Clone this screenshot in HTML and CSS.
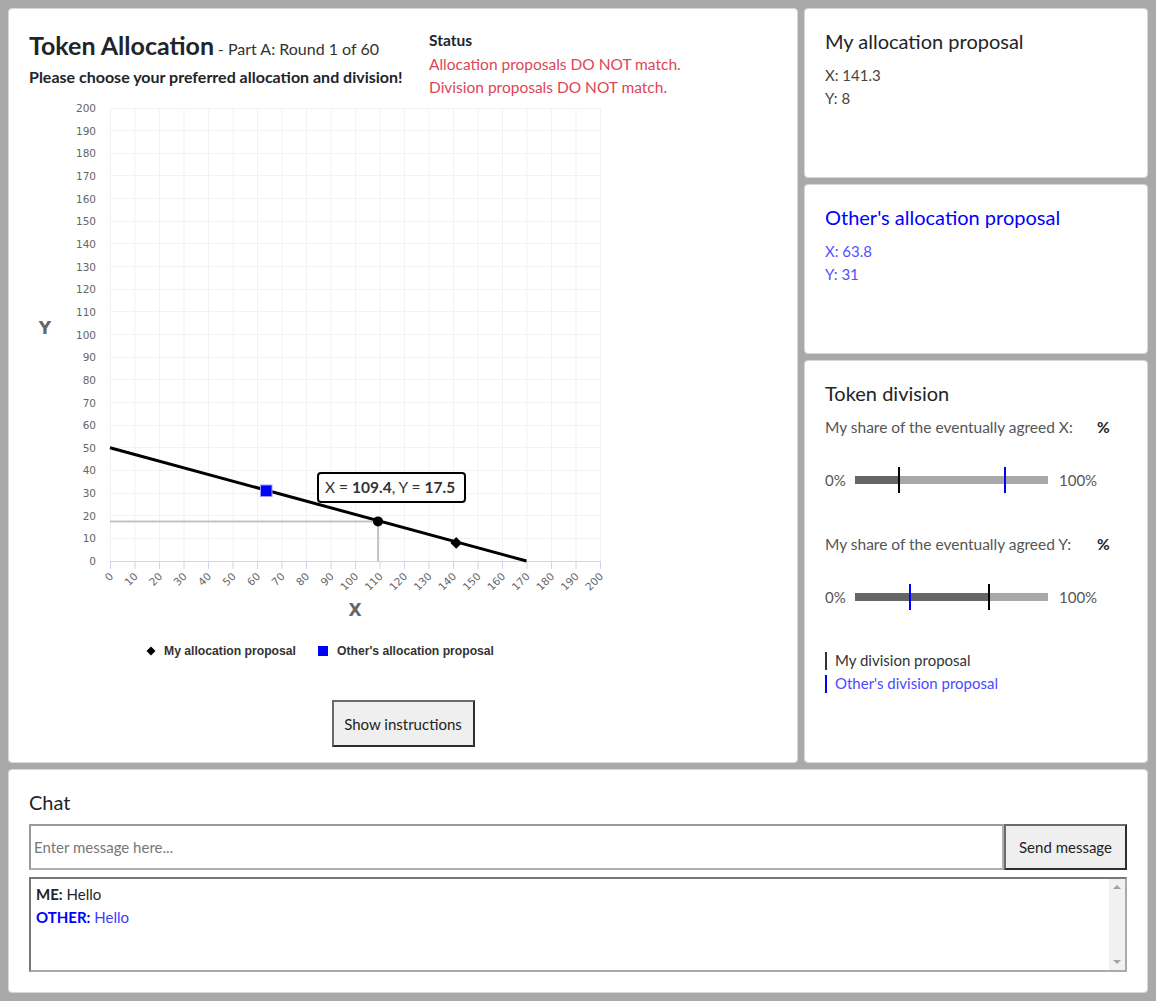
FILE: index.html
```html
<!DOCTYPE html>
<html>
<head>
<meta charset="utf-8">
<title>Token Allocation</title>
<link rel="stylesheet" href="styles.css">
</head>
<body>
<div class="page">
  <div class="top-row">
    <section class="panel main-panel">
      <div class="header">
        <div class="title-block">
          <div class="title-line"><span class="title">Token Allocation</span> <span class="round">- Part A: Round 1 of 60</span></div>
          <div class="instruction">Please choose your preferred allocation and division!</div>
        </div>
        <div class="status">
          <div class="status-head">Status</div>
          <div class="status-msg">Allocation proposals DO NOT match.</div>
          <div class="status-msg">Division proposals DO NOT match.</div>
        </div>
      </div>
      <svg class="chart" width="600" height="562" viewBox="0 0 600 562">
        <g class="grid">
          <path d="M81.5 9V462M106 9V462M130.5 9V462M155 9V462M179.5 9V462M204 9V462M228.5 9V462M253 9V462M277.5 9V462M302 9V462M326.5 9V462M351 9V462M375.5 9V462M400 9V462M424.5 9V462M449 9V462M473.5 9V462M498 9V462M522.5 9V462M547 9V462M571.5 9V462"/>
          <path d="M81 439.5H572M81 416.5H572M81 394.5H572M81 371.5H572M81 348.5H572M81 326.5H572M81 303.5H572M81 280.5H572M81 258.5H572M81 235.5H572M81 212.5H572M81 190.5H572M81 167.5H572M81 144.5H572M81 122.5H572M81 99.5H572M81 76.5H572M81 54.5H572M81 31.5H572M81 9.5H572"/>
        </g>
        <path class="axis" d="M81 462.5H572M81.5 462V470M106 462V470M130.5 462V470M155 462V470M179.5 462V470M204 462V470M228.5 462V470M253 462V470M277.5 462V470M302 462V470M326.5 462V470M351 462V470M375.5 462V470M400 462V470M424.5 462V470M449 462V470M473.5 462V470M498 462V470M522.5 462V470M547 462V470M571.5 462V470"/>
        <g class="ylabels">
          <text x="67" y="466">0</text>
          <text x="67" y="443.4">10</text>
          <text x="67" y="420.7">20</text>
          <text x="67" y="398">30</text>
          <text x="67" y="375.4">40</text>
          <text x="67" y="352.8">50</text>
          <text x="67" y="330.1">60</text>
          <text x="67" y="307.5">70</text>
          <text x="67" y="284.8">80</text>
          <text x="67" y="262.2">90</text>
          <text x="67" y="239.5">100</text>
          <text x="67" y="216.9">110</text>
          <text x="67" y="194.2">120</text>
          <text x="67" y="171.6">130</text>
          <text x="67" y="148.9">140</text>
          <text x="67" y="126.3">150</text>
          <text x="67" y="103.6">160</text>
          <text x="67" y="81">170</text>
          <text x="67" y="58.3">180</text>
          <text x="67" y="35.7">190</text>
          <text x="67" y="13">200</text>
        </g>
        <g class="xlabels">
          <text transform="translate(85 478) rotate(-45)">0</text>
          <text transform="translate(109.5 478) rotate(-45)">10</text>
          <text transform="translate(134 478) rotate(-45)">20</text>
          <text transform="translate(158.5 478) rotate(-45)">30</text>
          <text transform="translate(183 478) rotate(-45)">40</text>
          <text transform="translate(207.5 478) rotate(-45)">50</text>
          <text transform="translate(232 478) rotate(-45)">60</text>
          <text transform="translate(256.5 478) rotate(-45)">70</text>
          <text transform="translate(281 478) rotate(-45)">80</text>
          <text transform="translate(305.5 478) rotate(-45)">90</text>
          <text transform="translate(330 478) rotate(-45)">100</text>
          <text transform="translate(354.5 478) rotate(-45)">110</text>
          <text transform="translate(379 478) rotate(-45)">120</text>
          <text transform="translate(403.5 478) rotate(-45)">130</text>
          <text transform="translate(428 478) rotate(-45)">140</text>
          <text transform="translate(452.5 478) rotate(-45)">150</text>
          <text transform="translate(477 478) rotate(-45)">160</text>
          <text transform="translate(501.5 478) rotate(-45)">170</text>
          <text transform="translate(526 478) rotate(-45)">180</text>
          <text transform="translate(550.5 478) rotate(-45)">190</text>
          <text transform="translate(575 478) rotate(-45)">200</text>
        </g>
        <text class="axis-title" x="16" y="235">Y</text>
        <text class="axis-title" x="326" y="517">X</text>
        <path class="crosshair" d="M81 422.4H349M349 422.4V462"/>
        <path class="budget" d="M81 348.75L497.5 462"/>
        <circle class="hover-pt" cx="349" cy="422.4" r="5"/>
        <path class="my-pt" d="M427.2 438L433 443.9L427.2 449.8L421.4 443.9Z"/>
        <rect class="other-pt" x="231.5" y="386" width="11.5" height="11.5"/>
        <g class="tooltip">
          <rect x="289" y="374" width="147" height="29" rx="3"/>
          <text x="296" y="394">X = <tspan class="b">109.4</tspan>, Y = <tspan class="b">17.5</tspan></text>
        </g>
        <g class="legend">
          <path class="my-pt" d="M122 547.5L126.5 552L122 556.5L117.5 552Z"/>
          <text x="135" y="556" textLength="132" lengthAdjust="spacingAndGlyphs">My allocation proposal</text>
          <rect class="other-leg" x="289" y="547" width="10" height="10"/>
          <text x="308" y="556" textLength="157" lengthAdjust="spacingAndGlyphs">Other's allocation proposal</text>
        </g>
      </svg>
      <div class="btn-row"><button class="btn">Show instructions</button></div>
    </section>

    <div class="side">
      <section class="panel side-panel small">
        <h5 class="panel-title">My allocation proposal</h5>
        <div class="values">
          <div class="value">X: 141.3</div>
          <div class="value">Y: 8</div>
        </div>
      </section>
      <section class="panel side-panel small other">
        <h5 class="panel-title">Other's allocation proposal</h5>
        <div class="values">
          <div class="value">X: 63.8</div>
          <div class="value">Y: 31</div>
        </div>
      </section>
      <section class="panel side-panel grow">
        <h5 class="panel-title">Token division</h5>
        <div class="share-label"><span class="share-text">My share of the eventually agreed X:</span><span class="pct">%</span></div>
        <div class="slider-row">
          <span class="end">0%</span>
          <div class="bar">
            <div class="fill" style="width:22.8%"></div>
            <div class="marker mine" style="left:22.8%"></div>
            <div class="marker theirs" style="left:77.7%"></div>
          </div>
          <span class="end">100%</span>
        </div>
        <div class="share-label"><span class="share-text">My share of the eventually agreed Y:</span><span class="pct">%</span></div>
        <div class="slider-row">
          <span class="end">0%</span>
          <div class="bar">
            <div class="fill" style="width:69.4%"></div>
            <div class="marker theirs" style="left:28.5%"></div>
            <div class="marker mine" style="left:69.4%"></div>
          </div>
          <span class="end">100%</span>
        </div>
        <div class="div-legend">
          <div class="leg-item"><span class="leg-bar"></span>My division proposal</div>
          <div class="leg-item other-item"><span class="leg-bar"></span>Other's division proposal</div>
        </div>
      </section>
    </div>
  </div>

  <section class="panel chat-panel">
    <h5 class="panel-title">Chat</h5>
    <div class="chat-input-row">
      <input class="chat-input" type="text" placeholder="Enter message here...">
      <button class="btn send">Send message</button>
    </div>
    <div class="messages">
      <div class="msg-list">
        <div class="msg"><b>ME:</b> Hello</div>
        <div class="msg other-msg"><b>OTHER:</b> Hello</div>
      </div>
      <div class="scrollbar">
        <span class="arrow up"></span>
        <span class="arrow down"></span>
      </div>
    </div>
  </section>
</div>
</body>
</html>
```

FILE: styles.css
```css
* { box-sizing: border-box; }
html, body { margin: 0; padding: 0; }
body {
  background: #a9a9a9;
  font-family: Lato, "Open Sans", sans-serif;
  color: #212529;
  font-size: 15px;
}
.page {
  width: 1156px;
  height: 1001px;
  padding: 8px;
  display: flex;
  flex-direction: column;
  gap: 6px;
}
.top-row {
  display: flex;
  gap: 6px;
  height: 755px;
  flex-shrink: 0;
}
.panel {
  background: #fff;
  border: 1px solid #d8d8d8;
  border-radius: 4px;
  padding: 20px;
}
.main-panel {
  width: 790px;
  display: flex;
  flex-direction: column;
}
.main-panel > * { flex-shrink: 0; }
.header {
  display: flex;
  height: 70px;
}
.title-block { width: 400px; }
.title-line { line-height: 33px; white-space: nowrap; }
.title { font-size: 25px; font-weight: 700; }
.round { font-size: 16px; color: #333; }
.instruction { font-size: 16px; font-weight: 700; margin-top: 0; line-height: 22px; white-space: nowrap; }
.status { line-height: 23.5px; font-size: 15.5px; }
.status-head { font-weight: 700; }
.status-msg { color: #de4557; }

.chart { display: block; }
.grid path { stroke: #f2f2f2; stroke-width: 1; fill: none; }
.axis { stroke: #ccd6eb; stroke-width: 1; fill: none; }
.ylabels text { font-family: "DejaVu Sans", sans-serif; font-size: 10.5px; fill: #666; text-anchor: end; }
.xlabels text { font-family: "DejaVu Sans", sans-serif; font-size: 10.5px; fill: #666; text-anchor: end; }
.axis-title { font-family: "DejaVu Sans", sans-serif; font-size: 17px; font-weight: 700; fill: #666; text-anchor: middle; }
.crosshair { stroke: #c4c4c4; stroke-width: 2; fill: none; }
.budget { stroke: #000; stroke-width: 3; fill: none; }
.hover-pt { fill: #000; }
.my-pt { fill: #000; }
.other-pt { fill: #0000ff; stroke: #9a9aff; stroke-width: 1; }
.other-leg { fill: #0000ff; }
.tooltip rect { fill: #fff; stroke: #000; stroke-width: 2; }
.tooltip text { font-family: Lato, sans-serif; font-size: 15.5px; fill: #333; }
.tooltip .b { font-weight: 700; }
.legend text { font-family: "Liberation Sans", sans-serif; font-size: 12px; font-weight: 700; fill: #333; }

.btn-row { display: flex; justify-content: center; margin-top: 39px; }
.btn {
  font-family: Lato, "Open Sans", sans-serif;
  font-size: 15px;
  color: #222;
  background: #efefef;
  border: 2px solid;
  border-color: #6a6a6a #2e2e2e #2e2e2e #6a6a6a;
  padding: 0 10px;
  height: 47px;
  width: 143px;
}

.side {
  width: 344px;
  display: flex;
  flex-direction: column;
  gap: 6px;
}
.side-panel.small { height: 170px; flex-shrink: 0; }
.side-panel.grow { flex: 1; }
.panel-title {
  margin: 0 0 10px;
  font-size: 20px;
  font-weight: 400;
  line-height: 24px;
}
.values { padding-top: 1px; }
.value { color: #444; line-height: 22.5px; }
.other .panel-title { color: #0000ff; }
.other .value { color: #5050ff; }

.share-label { display: flex; line-height: 24px; color: #555; font-size: 15.5px; }
.share-text { width: 272px; }
.pct { font-weight: 700; color: #222; }
.slider-row {
  display: flex;
  align-items: center;
  gap: 10px;
  height: 26px;
  margin: 28px 0 39px;
  color: #555;
}
.end { width: 20px; }
.end:last-child { width: auto; margin-left: 1px; }
.bar {
  position: relative;
  width: 193px;
  height: 8px;
  background: #a8a8a8;
}
.fill { height: 100%; background: #666; }
.marker {
  position: absolute;
  top: -9px;
  width: 2px;
  height: 26px;
  margin-left: -1px;
}
.marker.mine { background: #000; }
.marker.theirs { background: #0000ff; }
.div-legend { line-height: 23px; }
.leg-item { display: flex; align-items: center; gap: 8px; color: #333; }
.leg-bar { width: 2px; height: 18px; background: #333; }
.other-item { color: #4a4aff; }
.other-item .leg-bar { background: #0000ff; }

.chat-panel { height: 224px; flex-shrink: 0; }
.chat-panel .panel-title { margin-bottom: 10px; }
.chat-input-row { display: flex; height: 46px; }
.chat-input {
  flex: 1;
  font-family: Lato, "Open Sans", sans-serif;
  font-size: 15px;
  border: 2px solid;
  border-color: #9a9a9a #b0b0b0 #b0b0b0 #9a9a9a;
  padding: 0 3px;
  outline: none;
  height: 46px;
}
.chat-input::placeholder { color: #777; }
.btn.send { width: 123px; padding: 0; height: 46px; }
.messages {
  margin-top: 7px;
  height: 95px;
  border: 2px solid;
  border-color: #777 #aaa #aaa #777;
  display: flex;
}
.msg-list { flex: 1; padding: 4px 5px; }
.msg { line-height: 23px; }
.other-msg { color: #3b3bff; }
.other-msg b { color: #0000ff; }
.scrollbar {
  width: 16px;
  background: #f1f1f1;
  display: flex;
  flex-direction: column;
  justify-content: space-between;
  align-items: center;
  padding: 6px 0;
}
.arrow {
  width: 0;
  height: 0;
  border-left: 4px solid transparent;
  border-right: 4px solid transparent;
}
.arrow.up { border-bottom: 4px solid #a3a3a3; }
.arrow.down { border-top: 4px solid #a3a3a3; }
```
